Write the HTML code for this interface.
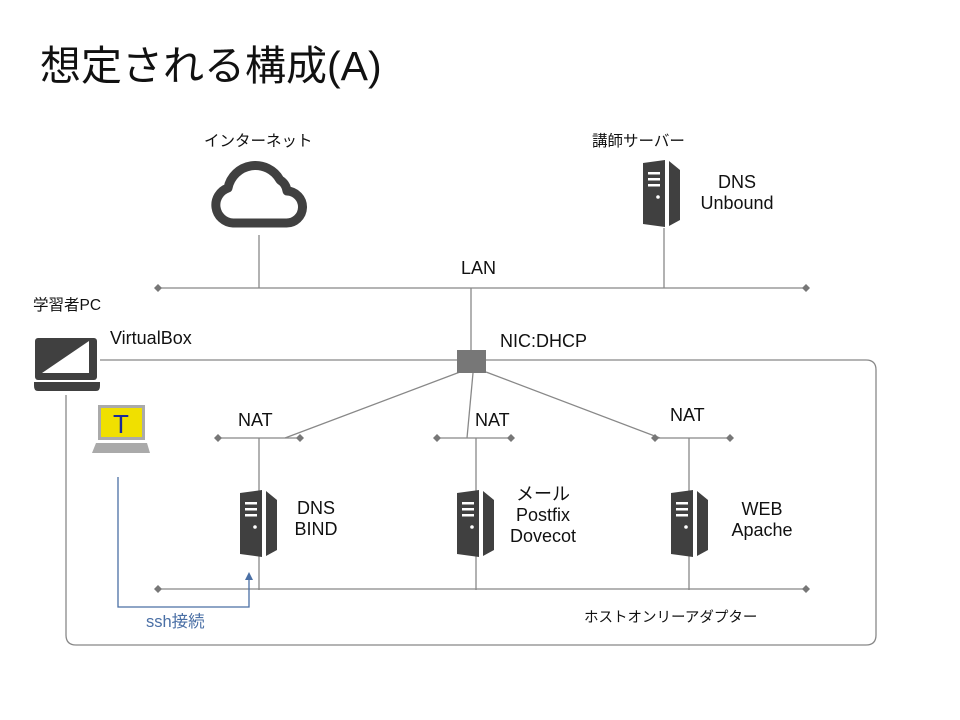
<!DOCTYPE html><html><head><meta charset="utf-8"><style>
body{margin:0;width:960px;height:720px;background:#fff;overflow:hidden;position:relative;font-family:"Liberation Sans","Noto Sans CJK JP",sans-serif;color:#111}
.t{position:absolute;font-size:18px;white-space:nowrap;line-height:21px}
.j{font-size:15.5px}
.c{text-align:center}
</style></head><body>
<div class="t" style="left:40px;top:42px;font-size:41px;line-height:48px">想定される構成(A)</div>
<svg width="960" height="720" style="position:absolute;left:0;top:0">
<defs><g id="sv"><path d="M0,3 L22,0 L22,67 L0,64Z" fill="#404040"/><path d="M26,1 L37,10 L37,60 L26,66Z" fill="#404040"/>
<rect x="5" y="12" width="12" height="2.5" fill="#fff"/><rect x="5" y="18" width="12" height="2.5" fill="#fff"/><rect x="5" y="24" width="12" height="2.5" fill="#fff"/><circle cx="15" cy="37" r="1.8" fill="#fff"/></g>
<g id="dm"><path d="M0,-4 L4,0 L0,4 L-4,0Z" fill="#777"/></g></defs>
<g stroke="#888" stroke-width="1.3" fill="none">
<line x1="158" y1="288" x2="806" y2="288"/>
<line x1="259" y1="235" x2="259" y2="288"/>
<line x1="664" y1="228" x2="664" y2="288"/>
<line x1="471" y1="288" x2="471" y2="350"/>
<path d="M100,360 H457 M486,360 H866 Q876,360 876,370 V635 Q876,645 866,645 H76 Q66,645 66,635 V395"/>
<line x1="460" y1="372" x2="285" y2="438"/>
<line x1="473" y1="373" x2="467" y2="438"/>
<line x1="486" y1="372" x2="660" y2="438"/>
<line x1="218" y1="438" x2="300" y2="438"/>
<line x1="437" y1="438" x2="511" y2="438"/>
<line x1="655" y1="438" x2="730" y2="438"/>
<line x1="259" y1="438" x2="259" y2="590"/>
<line x1="476" y1="438" x2="476" y2="590"/>
<line x1="689" y1="438" x2="689" y2="590"/>
<line x1="158" y1="589" x2="806" y2="589"/>
</g>
<g><use href="#dm" x="158" y="288"/><use href="#dm" x="806" y="288"/><use href="#dm" x="218" y="438"/><use href="#dm" x="300" y="438"/><use href="#dm" x="437" y="438"/><use href="#dm" x="511" y="438"/><use href="#dm" x="655" y="438"/><use href="#dm" x="730" y="438"/><use href="#dm" x="158" y="589"/><use href="#dm" x="806" y="589"/></g>
<rect x="457" y="350" width="29" height="23" fill="#777"/>
<path d="M118,477 V607 H249 V578" stroke="#4a6fa5" stroke-width="1.3" fill="none"/>
<path d="M245,580 L249,572 L253,580Z" fill="#4a6fa5"/>
<!-- cloud -->
<path d="M233,223 A18,18 0 0 1 228,188 A28,28 0 0 1 280,180 A15,15 0 0 1 287,191 A16,16 0 0 1 286,223 Z" fill="none" stroke="#404040" stroke-width="9" stroke-linejoin="round"/>
<use href="#sv" x="643" y="160"/>
<use href="#sv" x="240" y="490"/>
<use href="#sv" x="457" y="490"/>
<use href="#sv" x="671" y="490"/>
<!-- laptop -->
<rect x="35" y="338" width="62" height="42" rx="3" fill="#404040"/>
<path d="M42,373 L89,341 L89,373Z" fill="#fff"/>
<path d="M34,382 H100 V386 Q100,391 96,391 H38 Q34,391 34,386Z" fill="#404040"/>
<!-- teraterm -->
<rect x="98" y="405" width="47" height="35" fill="#aaa"/>
<rect x="101" y="408" width="41" height="29" fill="#f0e000"/>
<text x="121" y="433" font-size="26" fill="#1a2a9a" text-anchor="middle" font-family="Liberation Sans">T</text>
<path d="M96,443 H147 L150,453 H92Z" fill="#aaa"/>
</svg>
<div class="t j" style="left:204px;top:131px">インターネット</div>
<div class="t j" style="left:592px;top:131px">講師サーバー</div>
<div class="t c" style="left:690px;top:172px;width:94px">DNS<br>Unbound</div>
<div class="t" style="left:461px;top:258px">LAN</div>
<div class="t j" style="left:33px;top:295px">学習者PC</div>
<div class="t" style="left:110px;top:328px">VirtualBox</div>
<div class="t" style="left:500px;top:331px">NIC:DHCP</div>
<div class="t" style="left:238px;top:410px">NAT</div>
<div class="t" style="left:475px;top:410px">NAT</div>
<div class="t" style="left:670px;top:405px">NAT</div>
<div class="t c" style="left:281px;top:498px;width:70px">DNS<br>BIND</div>
<div class="t c" style="left:500px;top:484px;width:86px">メール<br>Postfix<br>Dovecot</div>
<div class="t c" style="left:722px;top:499px;width:80px">WEB<br>Apache</div>
<div class="t j" style="left:584px;top:608px;font-size:14.5px">ホストオンリーアダプター</div>
<div class="t j" style="left:146px;top:612px;color:#4a6fa5;font-size:16.5px">ssh接続</div>
</body></html>
